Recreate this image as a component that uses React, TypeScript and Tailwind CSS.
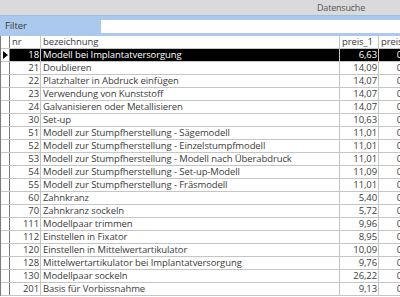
const rows: [string, string, string][] = [
  ['18', 'Modell bei Implantatversorgung', '6,63'],
  ['21', 'Doublieren', '14,09'],
  ['22', 'Platzhalter in Abdruck einfügen', '14,07'],
  ['23', 'Verwendung von Kunststoff', '14,07'],
  ['24', 'Galvanisieren oder Metallisieren', '14,07'],
  ['30', 'Set-up', '10,63'],
  ['51', 'Modell zur Stumpfherstellung - Sägemodell', '11,01'],
  ['52', 'Modell zur Stumpfherstellung - Einzelstumpfmodell', '11,01'],
  ['53', 'Modell zur Stumpfherstellung - Modell nach Überabdruck', '11,01'],
  ['54', 'Modell zur Stumpfherstellung - Set-up-Modell', '11,09'],
  ['55', 'Modell zur Stumpfherstellung - Fräsmodell', '11,01'],
  ['60', 'Zahnkranz', '5,40'],
  ['70', 'Zahnkranz sockeln', '5,72'],
  ['111', 'Modellpaar trimmen', '9,96'],
  ['112', 'Einstellen in Fixator', '8,95'],
  ['120', 'Einstellen in Mittelwertartikulator', '10,09'],
  ['128', 'Mittelwertartikulator bei Implantatversorgung', '9,76'],
  ['130', 'Modellpaar sockeln', '26,22'],
  ['201', 'Basis für Vorbissnahme', '9,13'],
];

export default function App() {
  return (
    <div className="w-[400px] h-[297px] overflow-hidden bg-white text-[#3c3c3c] font-['Open_Sans',sans-serif] text-[9.5px] tracking-[-0.1px] leading-none">
      {/* title bar */}
      <div className="h-[15px] bg-[#dadada] flex items-center pl-[317px] text-[#555] text-[9px] tracking-[-0.2px] font-medium">
        Datensuche
      </div>

      {/* filter */}
      <div className="h-[21px] bg-[#abc9ed] flex items-center border-t border-[#9dbde6]">
        <div className="w-[101px] pl-[5px]">Filter</div>
        <div className="flex-1 h-[13px] bg-white" />
      </div>

      {/* grid */}
      <div className="flex flex-col w-[430px] border-l border-[#7a7a7a]">
        <div className="h-[13px] flex border-b border-[#c5c5c5]">
          <div className="w-[9px] shrink-0 border-r border-[#7a7a7a]" />
          <div className="w-[31px] shrink-0 border-r border-[#c5c5c5] pl-[2px] flex items-center">nr</div>
          <div className="w-[299px] shrink-0 border-r border-[#c5c5c5] pl-[2px] flex items-center">bezeichnung</div>
          <div className="w-[39px] shrink-0 border-r border-[#c5c5c5] pl-[2px] flex items-center">preis_1</div>
          <div className="w-[38px] shrink-0 pl-[2px] flex items-center whitespace-nowrap">preis_2</div>
        </div>
        {rows.map(([nr, name, preis], i) => {
          const sel = i === 0;
          return (
            <div key={nr} className="h-[13px] flex border-b border-[#c5c5c5]">
              <div className="w-[9px] shrink-0 border-r border-[#7a7a7a] bg-white flex items-center pl-[2px]">
                {sel && (
                  <div className="w-0 h-0 border-y-[4px] border-y-transparent border-l-[5px] border-l-black" />
                )}
              </div>
              <div className={sel ? 'flex shrink-0 bg-black text-white' : 'flex shrink-0'}>
                <div className="w-[31px] shrink-0 border-r border-[#c5c5c5] pr-[1px] flex items-center justify-end">{nr}</div>
                <div className="w-[299px] shrink-0 border-r border-[#c5c5c5] pl-[2px] flex items-center whitespace-nowrap overflow-hidden">{name}</div>
                <div className="w-[39px] shrink-0 border-r border-[#c5c5c5] pr-[1px] flex items-center justify-end">{preis}</div>
                <div className="w-[38px] shrink-0 pr-[2px] flex items-center justify-end">0,00</div>
              </div>
            </div>
          );
        })}
      </div>
    </div>
  );
}
